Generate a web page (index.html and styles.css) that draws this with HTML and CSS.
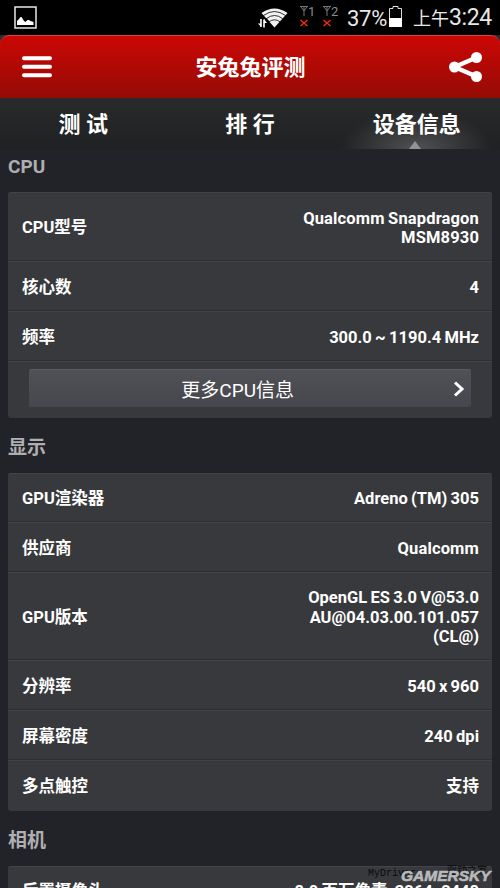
FILE: index.html
```html
<!DOCTYPE html>
<html lang="zh-CN">
<head>
    <meta charset="UTF-8">
    <meta name="viewport" content="width=device-width, initial-scale=1.0">
    <title>安兔兔评测</title>
    <link rel="stylesheet" href="styles.css">
</head>
<body>
    <div class="statusbar">
        <svg class="picture" width="23" height="23" viewBox="0 0 23 23">
            <rect x="1" y="1" width="21" height="21" fill="none" stroke="#e8e8e8" stroke-width="1.5"/>
            <path d="M3 19v-4l2-2 1.500-2h1l2.500 4 1.500 1 2-2h1.500l1.500 1 3 1v3z" fill="#fff"/>
        </svg>
        <svg class="wifi" width="30" height="20" viewBox="0 0 30 20">
            <path d="M3.500 5Q16.500-4 29.500 5L16.500 19.500Z" fill="#f2f2f2"/>
            <path d="M5.500 7.500Q16.500-.5 27.500 7.500M8.500 10.500Q16.500 4.500 24.500 10.500M11 13.800Q16.500 9.800 22 13.800" fill="none" stroke="#000" stroke-width=".8"/>
            <path d="M0 10h8.500l2.500 3v7H0z" fill="#000"/>
            <path d="M3 11v8M6 19.500v-8" fill="none" stroke="#fff" stroke-width="1.600"/>
            <path d="M0 15.500h3V19zM6 11l3 4H6z" fill="#fff"/>
        </svg>
        <div class="sim">
            <svg width="8" height="10" viewBox="0 0 8 10"><path d="M0 .5h8M1 1l3 4 3-4M4 0v10" fill="none" stroke="#777"/></svg>
            <span>1</span>
            <svg class="cross" width="8" height="8" viewBox="0 0 8 8"><path d="M.5 1l7 6M7.500 1L.5 7" stroke="#f02c10" stroke-width="1.500"/></svg>
        </div>
        <div class="sim">
            <svg width="8" height="10" viewBox="0 0 8 10"><path d="M0 .5h8M1 1l3 4 3-4M4 0v10" fill="none" stroke="#777"/></svg>
            <span>2</span>
            <svg class="cross" width="8" height="8" viewBox="0 0 8 8"><path d="M.5 1l7 6M7.500 1L.5 7" stroke="#f02c10" stroke-width="1.500"/></svg>
        </div>
        <span class="percent">37%</span>
        <svg class="battery" width="13" height="21" viewBox="0 0 13 21">
            <path d="M.5 20.500V2.500H4V.5h5v2h3.500v18z" fill="none" stroke="#ddd"/>
            <path d="M0 12h13v9H0z" fill="#fff"/>
        </svg>
        <span class="clock"><span class="ampm">上午</span>3:24</span>
    </div>

    <div class="header-wrap">
        <div class="header">
            <svg width="30" height="22" viewBox="0 0 30 22"><path d="M2 2.200h26M2 10.700h26M2 19.300h26" stroke="#fff" stroke-width="4" stroke-linecap="round"/></svg>
            <h1>安兔兔评测</h1>
            <svg width="34" height="30" viewBox="0 0 34 30">
                <path d="M27.500 5.500L5.500 15l22 9.500" fill="none" stroke="#fff" stroke-width="4.500"/>
                <circle cx="27.500" cy="5.500" r="5.500" fill="#fff"/>
                <circle cx="5.500" cy="15" r="5.500" fill="#fff"/>
                <circle cx="27.500" cy="24.500" r="5.500" fill="#fff"/>
            </svg>
        </div>
    </div>

    <div class="tabs">
        <div class="tab">测 试</div>
        <div class="tab">排 行</div>
        <div class="tab active">设备信息</div>
    </div>

    <div class="content">
        <h2>CPU</h2>
        <div class="card">
            <div class="row first two"><span>CPU型号</span><span class="value wide">Qualcomm Snapdragon<br>MSM8930</span></div>
            <div class="row"><span>核心数</span><span class="value">4</span></div>
            <div class="row"><span>频率</span><span class="value">300.0 ~ 1190.4 MHz</span></div>
            <div class="row more">
                <div class="button">
                    <span>更多CPU信息</span>
                    <svg width="12" height="16" viewBox="0 0 12 16"><path d="M2 1.500L9 8l-7 6.500" fill="none" stroke="#fff" stroke-width="3"/></svg>
                </div>
            </div>
        </div>

        <h2>显示</h2>
        <div class="card">
            <div class="row first"><span>GPU渲染器</span><span class="value">Adreno (TM) 305</span></div>
            <div class="row"><span>供应商</span><span class="value wide">Qualcomm</span></div>
            <div class="row three"><span>GPU版本</span><span class="value">OpenGL ES 3.0 V@53.0<br>AU@04.03.00.101.057<br>(CL@)</span></div>
            <div class="row"><span>分辨率</span><span class="value">540 x 960</span></div>
            <div class="row"><span>屏幕密度</span><span class="value">240 dpi</span></div>
            <div class="row last"><span>多点触控</span><span class="value">支持</span></div>
        </div>

        <h2>相机</h2>
        <div class="card">
            <div class="row first"><span>后置摄像头</span><span class="value">8.0 百万像素, 3264x2448</span></div>
        </div>
    </div>

    <div class="mydrivers">MyDrivers</div>
    <div class="mydrivers cn">驱动之家</div>
    <div class="gamersky">GAMERSKY</div>
</body>
</html>
```
FILE: styles.css
```css
* {
    box-sizing: border-box;
}

body {
    position: relative;
    margin: 0;
    width: 500px;
    height: 888px;
    overflow: hidden;
    background: #222328;
    color: #fff;
    font-family: Roboto, "Noto Sans CJK SC", sans-serif;
}

svg {
    display: block;
    flex: none;
}

h1, h2 {
    margin: 0;
}

/* status bar */
.statusbar {
    display: flex;
    height: 35px;
    padding-left: 14px;
    background: #000;
    color: #e8e8e8;
    white-space: nowrap;
}

.picture {
    margin-top: 6px;
}

.wifi {
    margin: 8px 0 0 221px;
}

.sim {
    display: grid;
    grid-template-columns: 8px 7px;
    grid-template-rows: 12px 9px;
    margin: 6px 0 0 12px;
    width: 12px;
    font-size: 13px;
    line-height: 11px;
    color: #8c8c8c;
}

.cross {
    margin-top: 1px;
}

.sim + .sim {
    margin-left: 11px;
}

.percent {
    width: 42px;
    margin-left: 12px;
    font-size: 22px;
    line-height: 37px;
    letter-spacing: -0.3px;
}

.battery {
    margin-top: 6px;
}

.clock {
    margin-left: 11px;
    font-size: 23px;
    line-height: 36px;
    letter-spacing: -0.4px;
}

.ampm {
    font-size: 18px;
    letter-spacing: 0;
}

/* header */
.header-wrap {
    background: #2a2b2d;
}

.header {
    display: flex;
    align-items: center;
    justify-content: space-between;
    height: 63px;
    padding: 0 17px 0 22px;
    border-top: 1px solid #d64444;
    border-radius: 9px 9px 0 0;
    background: linear-gradient(#cb0705, #950b05);
}

.header h1 {
    padding-top: 2px;
    font-size: 22px;
    line-height: 30px;
    font-weight: bold;
}

/* tabs */
.tabs {
    display: flex;
    height: 51px;
    background: linear-gradient(#292a2c, #202122);
}

.tab {
    position: relative;
    flex: 1;
    font-size: 22px;
    font-weight: bold;
    line-height: 54px;
    text-align: center;
}

.tab.active {
    background: radial-gradient(ellipse 76px 38px at 50% 100%, #505152, transparent);
}

.tab.active::after {
    content: "";
    position: absolute;
    left: 76px;
    bottom: 0;
    border: 6px solid transparent;
    border-top: 0;
    border-bottom: 8px solid #939393;
}

/* device info */
.content {
    padding: 0 8px;
}

h2 {
    height: 55px;
    padding-top: 2px;
    line-height: 55px;
    font-size: 19px;
    color: #afafb1;
}

h2:first-child {
    height: 43px;
    padding-top: 0;
    line-height: 35px;
}

.card {
    border-radius: 3px;
    background: #38393c;
}

.row {
    display: flex;
    align-items: center;
    justify-content: space-between;
    height: 50px;
    padding: 3px 13px 0 14px;
    border-top: 1px solid #434447;
    border-bottom: 1px solid #2d2e31;
    font-size: 16.5px;
    font-weight: bold;
    line-height: 19.5px;
}

.row.first {
    border-radius: 3px 3px 0 0;
}

.row.two {
    height: 69px;
}

.row.three {
    height: 88px;
}

.row.last {
    height: 51px;
    padding-top: 1px;
    border-bottom: 0;
    border-radius: 0 0 3px 3px;
}

.card .row.first:not(.two) {
    height: 49px;
}

.value {
    text-align: right;
    word-spacing: -0.8px;
}

.value.wide {
    letter-spacing: 0.15px;
}

.row.more {
    height: 57px;
    padding: 0 21px 4px;
    border-bottom: 0;
}

.button {
    display: flex;
    flex: 1;
    align-items: center;
    justify-content: flex-end;
    height: 38px;
    padding-right: 6px;
    border-top: 1px solid #5a5b5f;
    border-radius: 2px;
    background: linear-gradient(#505156, #46474c);
    font-size: 19px;
    font-weight: normal;
}

.button span {
    margin-right: 159px;
    padding-top: 5px;
}

/* watermarks */
.mydrivers {
    position: absolute;
    left: 368px;
    top: 867px;
    color: #09090a;
    font: 10px/14px "Liberation Mono", monospace;
}

.mydrivers.cn {
    left: 447px;
    top: 863px;
    font-family: "Noto Sans CJK SC", sans-serif;
}

.gamersky {
    position: absolute;
    left: 401px;
    top: 867px;
    color: #b9babb;
    font: italic bold 15.5px/18px "Liberation Sans", sans-serif;
    -webkit-text-stroke: 0.6px #b9babb;
}
```
